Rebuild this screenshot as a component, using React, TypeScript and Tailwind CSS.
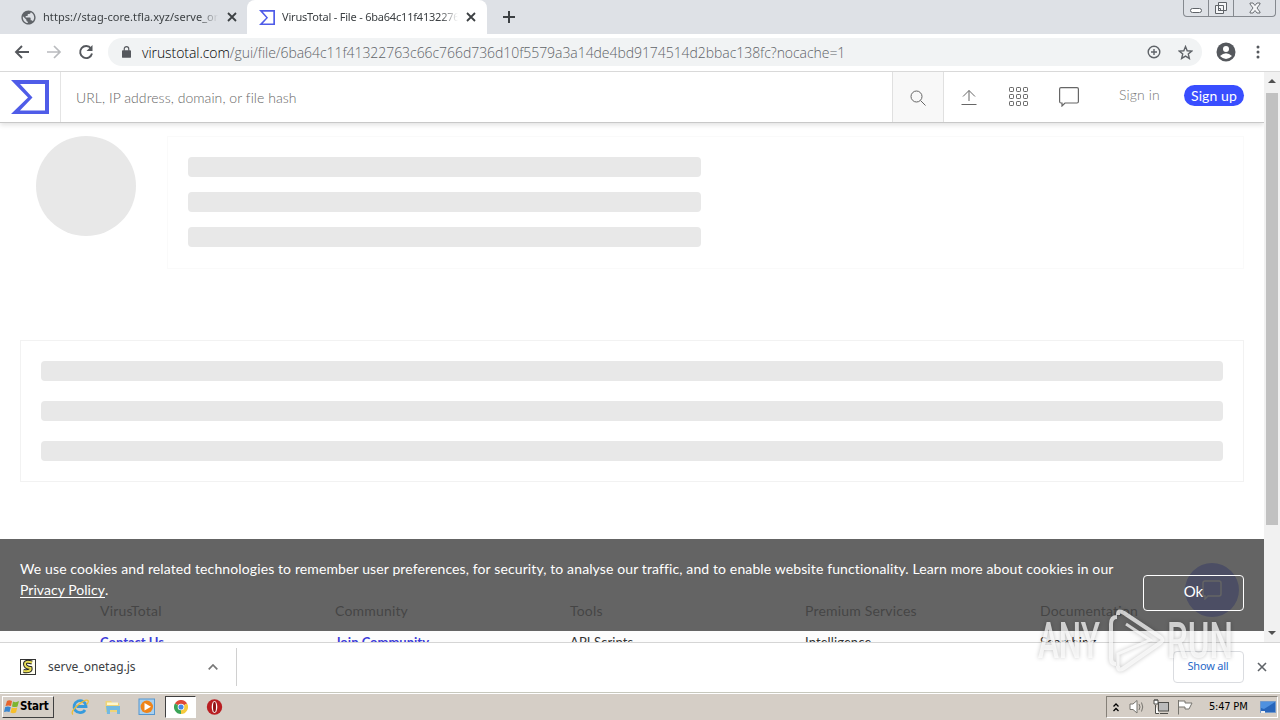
import type { ReactNode } from "react";

const footerColumns = [
  { title: "VirusTotal", link: "Contact Us", strong: true },
  { title: "Community", link: "Join Community", strong: true },
  { title: "Tools", link: "API Scripts", strong: false },
  { title: "Premium Services", link: "Intelligence", strong: false },
  { title: "Documentation", link: "Searching", strong: false },
];

function VtLogo({ className }: { className?: string }) {
  return (
    <svg viewBox="0 0 38 34" className={className} preserveAspectRatio="none">
      <path d="M0 0H38V34H0L17 17.500ZM9 4L21.500 17.500L9 30.500H34V4Z" fill="#4f5ce8" fillRule="evenodd" />
    </svg>
  );
}

function CloseX({ className }: { className?: string }) {
  return (
    <svg viewBox="0 0 10 10" className={className} fill="none" stroke="currentColor">
      <path d="M1 1L9 9M9 1L1 9" />
    </svg>
  );
}

function TabStrip() {
  return (
    <div className="flex h-[34px] shrink-0 bg-[#dee1e6] font-['Noto_Sans','Open_Sans',sans-serif] text-[11px] text-[#3c4043]">
      <div className="flex w-[247px] items-center pl-[21px]">
        <svg viewBox="0 0 24 24" className="size-[17px] -ml-px shrink-0">
          <path
            fill="#5f6368"
            d="M12 2C6.480 2 2 6.480 2 12s4.480 10 10 10 10-4.480 10-10S17.520 2 12 2zm-1 17.930c-3.950-.49-7-3.850-7-7.930 0-.62.08-1.210.21-1.790L9 15v1c0 1.100.9 2 2 2v1.930zm6.900-2.540c-.26-.81-1-1.390-1.900-1.390h-1v-3c0-.55-.45-1-1-1H8v-2h2c.55 0 1-.45 1-1V7h2c1.100 0 2-.9 2-2v-.41c2.930 1.190 5 4.060 5 7.410 0 2.080-.8 3.970-2.100 5.390z"
          />
        </svg>
        <span className="ml-[6px] w-[175px] overflow-hidden whitespace-nowrap tracking-[0.060px] [mask-image:linear-gradient(to_right,black_90%,transparent)]">
          https://stag-core.tfla.xyz/serve_onetag.js
        </span>
        <CloseX className="ml-[9px] size-[10px] shrink-0 stroke-[1.8]" />
      </div>
      <div className="flex w-[240px] items-center rounded-t-lg bg-white pl-[12px]">
        <VtLogo className="h-[15px] w-[16px] shrink-0" />
        <span className="ml-[7px] w-[176px] overflow-hidden whitespace-nowrap tracking-[-0.200px] [mask-image:linear-gradient(to_right,black_90%,transparent)]">
          VirusTotal - File - 6ba64c11f41322763c66c766
        </span>
        <CloseX className="ml-[8px] size-[10px] shrink-0 stroke-[1.8]" />
      </div>
      <svg viewBox="0 0 12 12" className="mt-[11px] ml-[16px] size-3" stroke="#3c4043" strokeWidth="2">
        <path d="M6 0V12M0 6H12" />
      </svg>
      <div className="ml-auto flex h-[17px] w-[93px] rounded-b border border-t-0 border-[#85898f] mr-[4px]">
        <div className="flex w-[25px] items-end justify-center border-r border-[#85898f] pb-[3px]">
          <div className="h-[5px] w-3 rounded-sm border border-[#5f6368] bg-white" />
        </div>
        <div className="flex w-[25px] items-center justify-center border-r border-[#85898f]">
          <svg viewBox="0 0 14 14" className="size-[14px]" fill="#f5f6f8" stroke="#5f6368">
            <path d="M4.500 1.500H12.500V9.500H4.500ZM1.500 4.500H9.500V12.500H1.500ZM4.500 7.500H6.500V9.500H4.500Z" />
          </svg>
        </div>
        <div className="flex flex-1 items-center justify-center">
          <svg viewBox="0 0 12 12" className="size-3" fill="#f5f6f8" stroke="#5f6368" strokeWidth=".9">
            <path d="M1 1H4L6 3.500L8 1H11V2L8 6L11 10V11H8L6 8.500L4 11H1V10L4 6L1 2Z" />
          </svg>
        </div>
      </div>
    </div>
  );
}

function AddressBar() {
  return (
    <div className="flex h-[37px] shrink-0 items-center bg-white pb-px text-[#5f6368]">
      <svg viewBox="0 0 16 16" className="ml-[14px] size-4" fill="none" stroke="#55585d" strokeWidth="1.9">
        <path d="M15 8H2M8 2L2 8L8 14" />
      </svg>
      <svg viewBox="0 0 16 16" className="ml-[16px] size-4" fill="none" stroke="#b9bbbe" strokeWidth="1.7">
        <path d="M1 8H14M8 2L14 8L8 14" />
      </svg>
      <svg viewBox="0 0 16 16" className="ml-[16px] size-4" fill="none" stroke="#55585d" strokeWidth="1.9">
        <path d="M13 4.500A6 6 0 1 0 14 9.500" />
        <path d="M14.500 1V7H8.500Z" fill="#55585d" stroke="none" />
      </svg>
      <div className="ml-[14px] flex h-7 w-[1094px] items-center rounded-full bg-[#f1f3f4] pl-[14px]">
        <svg viewBox="0 0 10 13" className="h-3 w-[9px] shrink-0">
          <rect y="4.500" width="10" height="8.500" rx="1" fill="#55585d" />
          <path d="M2.500 5V3a2.500 2.500 0 0 1 5 0V5" fill="none" stroke="#55585d" strokeWidth="1.300" />
        </svg>
        <span className="ml-[11px] w-[1004px] whitespace-nowrap font-['Open_Sans',sans-serif] text-[14px] font-light tracking-[-0.055px]">
          <span className="text-black">virustotal.com</span>/gui/file/6ba64c11f41322763c66c766d736d10f5579a3a14de4bd9174514d2bbac138fc?nocache=1
        </span>
        <svg viewBox="0 0 14 14" className="ml-[1px] size-[14px] shrink-0" fill="none" stroke="currentColor" strokeWidth="1.400">
          <circle cx="7" cy="7" r="5.800" />
          <path d="M7 4V10M4 7H10" />
        </svg>
        <svg viewBox="0 0 24 24" className="ml-[17px] size-[15px] shrink-0" fill="none" stroke="currentColor" strokeWidth="2.200">
          <path d="M12 2.500L14.700 9.200L22 9.700L16.400 14.400L18.200 21.500L12 17.700L5.800 21.500L7.600 14.400L2 9.700L9.300 9.200Z" />
        </svg>
      </div>
      <svg viewBox="0 0 20 20" className="ml-[14px] size-5">
        <circle cx="10" cy="10" r="9.500" fill="#55585d" />
        <circle cx="10" cy="7" r="3" fill="#fff" />
        <path d="M4 14Q10 8.500 16 14Q10 20 4 14Z" fill="#fff" />
      </svg>
      <svg viewBox="0 0 4 14" className="ml-[20px] h-[14px] w-1" fill="#55585d">
        <circle cx="2" cy="2" r="1.500" />
        <circle cx="2" cy="7" r="1.500" />
        <circle cx="2" cy="12" r="1.500" />
      </svg>
    </div>
  );
}

function SiteHeader() {
  return (
    <header className="flex h-[51px] shrink-0 border-b border-[#c8c8c8] bg-white text-[#666] shadow-[0_2px_5px_rgba(0,0,0,0.12)]">
      <div className="flex w-[61px] items-center border-r border-[#e4e4e4] pl-[11px]">
        <VtLogo className="h-[34px] w-[38px]" />
      </div>
      <div className="flex w-[831px] items-center pt-px pl-[15px] text-[14px] font-light tracking-[0.060px] text-[#666]">
        URL, IP address, domain, or file hash
      </div>
      <div className="flex w-[52px] items-center justify-center border-x border-[#e0e0e0] bg-[#f8f8f8]">
        <svg viewBox="0 0 16 16" className="mt-[2px] size-4" fill="none" stroke="currentColor">
          <circle cx="6.500" cy="6.500" r="5.500" />
          <path d="M10.500 10.500L15.500 15.500" />
        </svg>
      </div>
      <svg viewBox="0 0 16 16" className="mt-[17px] ml-[17px] size-4" fill="none" stroke="currentColor">
        <path d="M.5 15.500H15.500M8 12V1.500M2 7.500L8 1.500L14 7.500" />
      </svg>
      <svg viewBox="0 0 20 20" className="mt-[15px] ml-[32px] size-5" fill="none" stroke="currentColor">
        {[0.5, 7.5, 14.5].map((y) =>
          [0.5, 7.5, 14.5].map((x) => <rect key={`${x}-${y}`} x={x} y={y} width="4" height="4" rx=".7" />)
        )}
      </svg>
      <svg viewBox="0 0 20 20" className="mt-[15px] ml-[30px] size-5" fill="none" stroke="currentColor" strokeWidth="1.200">
        <path d="M2 .7H18Q19.400 .7 19.400 2V14.500Q19.400 16 18 16H6L3 19V16H2Q.6 16 .6 14.500V2Q.6 .7 2 .7Z" />
      </svg>
      <span className="mt-[13px] ml-[40px] w-[65px] text-[14px] leading-5 font-light text-[#777] tracking-[0.140px]">Sign in</span>
      <span className="mt-[13px] flex h-[21px] w-[60px] items-center justify-center rounded-full bg-[#394eff] text-[14px] tracking-[0.100px] text-white">
        Sign up
      </span>
    </header>
  );
}

function Banner() {
  return (
    <div className="absolute inset-x-0 bottom-[11px] flex h-[92px] bg-[#4e4e4e]/88 text-white">
      <p className="mt-[19px] ml-5 w-[1123px] text-[14px] leading-[21px] whitespace-nowrap tracking-[0.117px]">
        We use cookies and related technologies to remember user preferences, for security, to analyse our traffic, and to enable website functionality. Learn more about cookies in our
        <br />
        <a className="tracking-[0.040px] underline underline-offset-2">Privacy Policy</a>.
      </p>
      <button className="mt-[36px] h-[36px] w-[101px] shrink-0 rounded border border-white pb-[3px] text-[15px]">Ok</button>
    </div>
  );
}

function Page() {
  return (
    <div className="relative flex h-full w-[1264px] flex-col overflow-hidden bg-white">
      <SiteHeader />
      <div className="flex px-5 pt-[13px]">
        <div className="ml-4 size-[100px] rounded-full bg-[#e8e8e8]" />
        <div className="ml-[31px] flex h-[133px] flex-1 flex-col gap-[15px] border border-[#fafafa] px-5 pt-5">
          {[0, 1, 2].map((i) => (
            <div key={i} className="h-5 w-[513px] rounded bg-[#e8e8e8]" />
          ))}
        </div>
      </div>
      <div className="mx-5 mt-[71px] flex h-[142px] shrink-0 flex-col gap-5 border border-[#f2f2f2] p-5">
        {[0, 1, 2].map((i) => (
          <div key={i} className="h-5 rounded bg-[#e8e8e8]" />
        ))}
      </div>
      <footer className="mt-[89px] flex h-[92px] shrink-0 bg-[#fcfcfc] pt-[30px] pl-[100px]">
        {footerColumns.map(({ title, link, strong }) => (
          <div key={title} className="w-[235px] shrink-0 whitespace-nowrap">
            <div className="text-[14px] leading-5 tracking-[0.180px] text-black">{title}</div>
            <div
              className={
                strong
                  ? "mt-[11px] text-[13px] leading-5 font-bold text-[#3c3cd8]"
                  : "mt-[11px] text-[13px] leading-5 tracking-[0.100px] text-[#333]"
              }
            >
              {link}
            </div>
          </div>
        ))}
      </footer>
      <div className="absolute right-[25px] bottom-[25px] flex size-[54px] items-center justify-center rounded-full bg-[#394eff]">
        <svg viewBox="0 0 20 20" className="size-5" fill="none" stroke="#fff" strokeWidth="1.400">
          <path d="M3 1H17Q19 1 19 3V14Q19 16 17 16H6L3 19V16Q1 16 1 14V3Q1 1 3 1Z" />
        </svg>
      </div>
      <Banner />
    </div>
  );
}

function Scrollbar() {
  return (
    <div className="flex w-4 flex-col items-center bg-[#f1f1f1]">
      <div className="mt-[7px] border-x-4 border-b-4 border-x-transparent border-b-[#505050]" />
      <div className="mt-[10px] h-[432px] w-3 bg-[#c1c1c1]" />
      <div className="mt-auto mb-[7px] border-x-4 border-t-4 border-x-transparent border-t-[#505050]" />
    </div>
  );
}

function DownloadBar() {
  return (
    <div className="flex h-[50px] shrink-0 items-center border-t border-[#d5d5d5] bg-white pb-[2px] font-['Noto_Sans',sans-serif] text-[#3c4043]">
      <div className="ml-5 flex h-[38px] w-[217px] items-center border-r border-[#d0d0d0]">
        <svg viewBox="0 0 16 16" className="size-4">
          <rect x=".5" y=".5" width="15" height="15" fill="#fffef0" stroke="#333" />
          <path d="M12 3.500Q5 1.500 5 5T10.500 9Q11.500 13 3.500 12" fill="none" stroke="#222" strokeWidth="4" />
          <path d="M12 3.500Q5 1.500 5 5T10.500 9Q11.500 13 3.500 12" fill="none" stroke="#e8dd55" strokeWidth="2" />
        </svg>
        <span className="ml-3 w-[160px] text-[12px]">serve_onetag.js</span>
        <svg viewBox="0 0 10 6" className="h-[6px] w-[10px]" fill="none" stroke="#777" strokeWidth="1.700">
          <path d="M.7 5.300L5 1L9.300 5.300" />
        </svg>
      </div>
      <div className="ml-auto flex h-8 w-[71px] items-center justify-center rounded border border-[#dadce0] pr-px text-[11px] tracking-[-0.200px] text-[#2a69c8]">
        Show all
      </div>
      <CloseX className="mr-[13px] ml-[13px] size-[10px] stroke-[1.6] text-[#5f6368]" />
    </div>
  );
}

function TaskIcon({ children }: { children: ReactNode }) {
  return (
    <svg viewBox="0 0 18 18" className="size-[18px] shrink-0">
      {children}
    </svg>
  );
}

function Taskbar() {
  return (
    <div className="flex h-7 shrink-0 items-center border-t border-[#c7c8bd] bg-[#d5cec6] pt-px font-['DejaVu_Sans_Condensed','DejaVu_Sans',sans-serif] text-[11px] text-black shadow-[inset_0_1px_0_#fff]">
      <div className="ml-[2px] flex h-[22px] w-[52px] items-center border border-t-white border-r-[#404040] border-b-[#404040] border-l-white pl-px">
        <svg viewBox="0 0 16 16" className="size-4 shrink-0">
          <path d="M3 2Q5 .5 8 2L7 7Q4.500 6 1.500 7Z" fill="#e8642c" />
          <path d="M9 2.500Q12 4 15 2L13.500 7.500Q11 8.500 8 7.500Z" fill="#7db52f" />
          <path d="M1.200 8Q4 7 6.800 8.200L5.500 13Q3 12 0 13Z" fill="#3b86cf" />
          <path d="M7.800 8.500Q10.500 9.500 13.300 8.500L12 13.500Q9 15 6.500 13.500Z" fill="#f7bf2c" />
        </svg>
        <span className="text-[11.500px] font-bold tracking-[-0.200px]">Start</span>
      </div>
      <div className="ml-[17px]">
        <TaskIcon>
          <path d="M14 12A6 6 0 1 1 15 8.500H5.500" fill="none" stroke="#369bdd" strokeWidth="2.800" />
          <path d="M2 16.500Q-1 14 7 7Q15 .5 17 2.500Q18 4 15.500 6.500" fill="none" stroke="#edbd36" strokeWidth="1.300" />
        </TaskIcon>
      </div>
      <div className="ml-[15px]">
        <TaskIcon>
          <path d="M1.500 3H7L8.500 5H15V14H1.500Z" fill="#efd477" />
          <path d="M3 4.500H14V7H3Z" fill="#fff7cc" />
          <path d="M2 8H16V16H13V12H6V16H3Z" fill="#72b9e1" />
        </TaskIcon>
      </div>
      <div className="ml-[16px]">
        <TaskIcon>
          <rect x="1" y="1" width="15.500" height="15.500" fill="#a8d0ef" stroke="#5596cf" />
          <circle cx="8.800" cy="8.800" r="6.200" fill="#ef8419" />
          <path d="M6.500 5L13 8.800L6.500 12.500Z" fill="#fff" />
        </TaskIcon>
      </div>
      <div className="ml-[9px] flex h-[22px] w-[31px] items-center justify-center border border-t-[#404040] border-r-white border-b-white border-l-[#404040] bg-white">
        <svg viewBox="0 0 16 16" className="size-[14px]">
          <path d="M8 8L1.070 4A8 8 0 0 1 14.930 4Z" fill="#df4937" />
          <path d="M8 8L14.930 4A8 8 0 0 1 8 16Z" fill="#f6ca3d" />
          <path d="M8 8L8 16A8 8 0 0 1 1.070 4Z" fill="#3ba457" />
          <circle cx="8" cy="8" r="3.800" fill="#fff" />
          <circle cx="8" cy="8" r="2.900" fill="#4688e8" />
        </svg>
      </div>
      <div className="ml-[9px]">
        <TaskIcon>
          <circle cx="9.500" cy="9" r="7.700" fill="#b91e22" />
          <ellipse cx="9.500" cy="9" rx="2.800" ry="6" fill="#fff" />
          <ellipse cx="9.500" cy="9" rx="1.500" ry="5.200" fill="#901316" />
        </TaskIcon>
      </div>
      <div className="mr-[2px] ml-auto flex h-[22px] w-[172px] items-center border border-t-[#858078] border-r-white border-b-white border-l-[#858078]">
        <svg viewBox="0 0 6 9" className="ml-[6px] h-[9px] w-[6px] shrink-0" fill="none" stroke="#000" strokeWidth="1.300">
          <path d="M.5 3.500L3 1L5.500 3.500M.5 8L3 5.500L5.500 8" />
        </svg>
        <svg viewBox="0 0 17 16" className="ml-[10px] h-4 w-[17px] shrink-0" fill="none" stroke="#77756f">
          <path d="M1 5H4L8 1.500V14L4 10.500H1Z" fill="#fff" />
          <path d="M10 5Q12 8 10 11M12.500 3.500Q15 8 12.500 12.500" />
        </svg>
        <svg viewBox="0 0 16 16" className="ml-[7px] size-4 shrink-0" fill="#fff" stroke="#4f4e4a">
          <rect x="5.500" y="3.500" width="10" height="8.500" fill="#bbb" />
          <path d="M7 14.500H15M2.500 6V14.500H6M1 1H5V5H1ZM2 0V2M4 0V2" />
        </svg>
        <svg viewBox="0 0 16 16" className="ml-[8px] size-4 shrink-0" fill="#fff" stroke="#77756f">
          <path d="M1.500 1V15.500M1.500 2H8V4H15L12 10H8V8H1.500" />
        </svg>
        <span className="ml-[16px] w-[43px] pt-px text-[11px] whitespace-nowrap tracking-[-0.200px]">5:47 PM</span>
        <svg viewBox="0 0 16 14" className="ml-[8px] h-[14px] w-4 shrink-0">
          <path d="M.5 1.500H15.500V12.500H.5Z" fill="#2866bb" stroke="#7199cb" />
          <path d="M1 2H15L4 9L1 8Z" fill="#4f91df" />
          <path d="M1 11H5V13H1Z" fill="#eee" />
        </svg>
      </div>
    </div>
  );
}

function Watermark() {
  return (
    <svg viewBox="0 0 200 70" className="pointer-events-none absolute top-[606px] left-[1036px] h-[70px] w-[200px] drop-shadow-[0_0_2px_rgba(0,0,0,0.32)]">
      <g fill="#fff" fillOpacity=".72" fontFamily="Roboto, sans-serif" fontSize="50" fontWeight="500">
        <text x="2" y="52" textLength="62" lengthAdjust="spacingAndGlyphs">ANY</text>
        <text x="131" y="52" textLength="66" lengthAdjust="spacingAndGlyphs">RUN</text>
      </g>
      <g fill="none" stroke="#fff" strokeOpacity=".72" strokeWidth="4">
        <path d="M81 11Q75 11 75 18V52Q75 58 80 58" />
        <path d="M82 9Q82 3 88 7L124 31Q129 34 124 37L88 62Q82 66 82 60" />
        <path d="M82 60V48L114 34L90 18" strokeWidth="3" />
      </g>
    </svg>
  );
}

export default function App() {
  return (
    <div className="relative flex h-[720px] w-[1280px] flex-col overflow-hidden bg-white font-['Lato','Open_Sans',sans-serif]">
      <TabStrip />
      <AddressBar />
      <div className="flex h-[571px] shrink-0 border-t border-[#d9d9d9]">
        <Page />
        <Scrollbar />
      </div>
      <DownloadBar />
      <Taskbar />
      <Watermark />
    </div>
  );
}
